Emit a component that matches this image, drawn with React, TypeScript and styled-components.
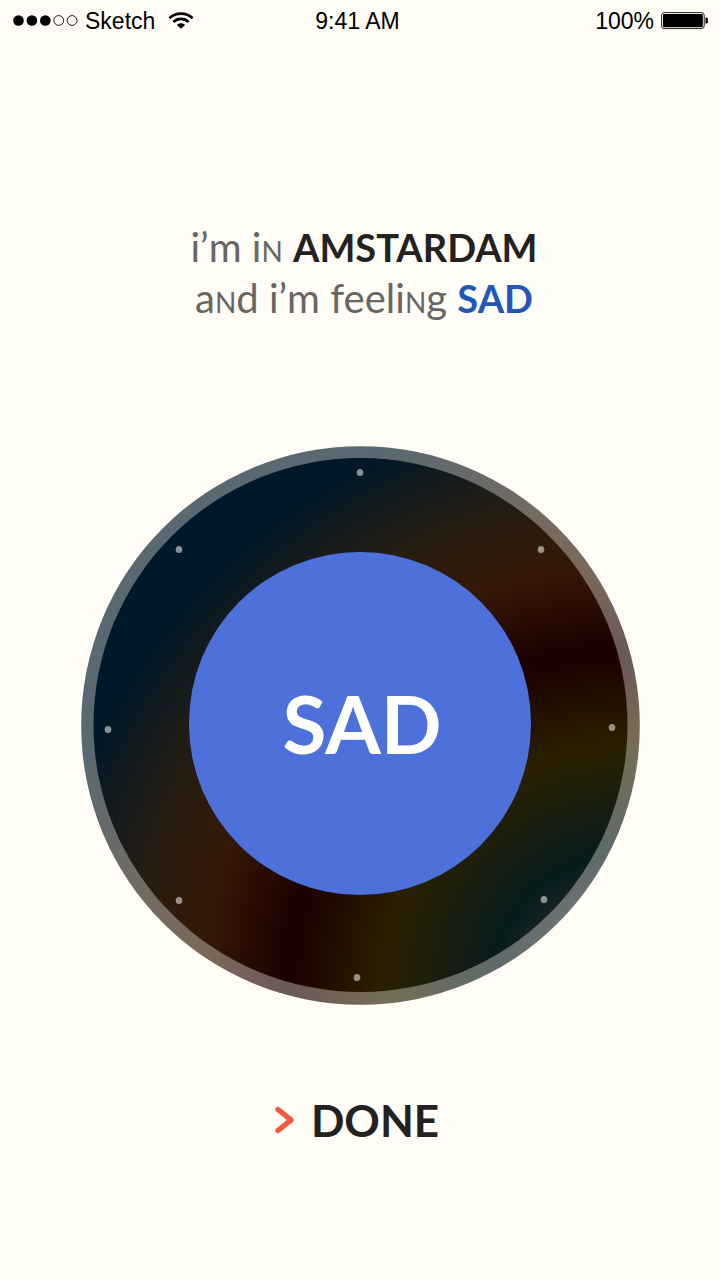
import React from "react";
import styled, { createGlobalStyle } from "styled-components";

const GlobalStyle = createGlobalStyle`
  * { box-sizing: border-box; }
  body {
    margin: 0;
    background: #fffdf6;
    color: #242220;
    font-family: Lato, "Liberation Sans", sans-serif;
  }
`;

const Screen = styled.div`
  display: flex;
  flex-direction: column;
  min-height: 100vh;
`;

const StatusBar = styled.header`
  display: grid;
  grid-template-columns: 1fr auto 1fr;
  align-items: center;
  height: 42px;
  padding: 0 12px 0 13px;
  color: #000;
  font: 23px/42px "Liberation Sans", sans-serif;
`;

const StatusGroup = styled.div<{ $align?: string }>`
  display: flex;
  align-items: center;
  justify-content: ${(p) => p.$align ?? "flex-start"};
  gap: 7px;
`;

const Carrier = styled.span`
  padding-right: 6px;
`;

const Clock = styled.time`
  padding-right: 6px;
`;

const Main = styled.main`
  flex: 1;
  display: flex;
  flex-direction: column;
  align-items: center;
  padding: 180px 0 120px;
`;

const Sentence = styled.h1`
  margin: 0 0 121px;
  padding-left: 8px;
  color: #686662;
  font-size: 40px;
  line-height: 51px;
  font-weight: 400;
  text-align: center;
`;

const Value = styled.strong<{ $color?: string }>`
  color: ${(p) => p.$color ?? "inherit"};
  font-size: 38px;
  font-weight: 700;
`;

const SmallCap = styled.span`
  font-variant-caps: small-caps;
`;

const Dial = styled.div`
  display: grid;
  place-items: center;
  width: 78%;
  max-width: 561px;
  aspect-ratio: 1;
  margin-bottom: 85px;

  > * { grid-area: 1 / 1; }
`;

const DialFace = styled.svg`
  display: block;
  width: 100%;
  height: 100%;
`;

const MoodButton = styled.button`
  width: 61%;
  height: 61%;
  margin-bottom: 4px;
  padding: 0 0 0 4px;
  border: 0;
  border-radius: 50%;
  background: #4d70da;
  color: #fff;
  font: 700 80px/100px Lato, "Liberation Sans", sans-serif;
  cursor: pointer;
`;

const DoneButton = styled.button`
  display: flex;
  align-items: center;
  gap: 16px;
  padding: 0 12px 0 0;
  margin-left: 6px;
  border: 0;
  background: none;
  color: #242220;
  font: 700 44px/58px Lato, "Liberation Sans", sans-serif;
  cursor: pointer;
`;

const ticks = [
  [360, 472], [541, 549], [612, 727], [544, 899],
  [357, 977], [179, 900], [108, 729], [179, 549],
];

const SignalDots = () => (
  <svg width="65" height="12" viewBox="0 0 65 12" aria-label="Signal 3 of 5">
    {[0, 1, 2, 3, 4].map((i) => (
      <circle key={i} cx={5.5 + i * 13.4} cy="5.5" r={i < 3 ? 5.3 : 4.9}
        fill={i < 3 ? "#000" : "none"} stroke={i < 3 ? "none" : "#000"} strokeWidth="0.9" />
    ))}
  </svg>
);

const Wifi = () => (
  <svg width="26" height="18" viewBox="0 0 26 18" aria-label="Wi-Fi">
    <g fill="none" stroke="#000" strokeWidth="2.7">
      <path d="M1.4 6.2C8 .2 18 .2 24.6 6.2" />
      <path d="M5.3 10C9.7 5.9 16.3 5.9 20.7 10" />
    </g>
    <path d="M8.8 13C11.2 10.8 14.8 10.8 17.2 13L13 16.8Z" fill="#000" />
  </svg>
);

const Battery = () => (
  <svg width="47" height="18" viewBox="0 0 47 18" aria-label="Battery full">
    <rect x="0.6" y="0.6" width="42.6" height="16" rx="2.6" fill="none" stroke="#222" strokeWidth="1" />
    <rect x="2" y="2" width="39.8" height="13.2" rx="1" fill="#000" />
    <path d="M44.4 5.5H45.4Q46.9 5.5 46.9 7V10Q46.9 11.5 45.4 11.5H44.4Z" fill="#000" />
  </svg>
);

export default function App() {
  return (
    <Screen>
      <GlobalStyle />
      <StatusBar>
        <StatusGroup>
          <SignalDots />
          <Carrier>Sketch</Carrier>
          <Wifi />
        </StatusGroup>
        <Clock>9:41 AM</Clock>
        <StatusGroup $align="flex-end">
          <span>100%</span>
          <Battery />
        </StatusGroup>
      </StatusBar>
      <Main>
        <Sentence>
          i’m i<SmallCap>n</SmallCap> <Value $color="#242220">AMSTARDAM</Value>
          <br />
          a<SmallCap>n</SmallCap>d i’m feeli<SmallCap>n</SmallCap>g <Value $color="#2257b8">SAD</Value>
        </Sentence>
        <Dial>
          <DialFace viewBox="80 445 561 561" aria-hidden="true">
            <defs>
              <radialGradient id="sheen" gradientUnits="userSpaceOnUse" cx="630" cy="992" r="600">
                <stop offset="0.16" stopColor="#20272b" />
                <stop offset="0.23" stopColor="#071c1d" />
                <stop offset="0.41" stopColor="#2b2000" />
                <stop offset="0.57" stopColor="#1b0000" />
                <stop offset="0.71" stopColor="#351807" />
                <stop offset="0.83" stopColor="#261d12" />
                <stop offset="0.99" stopColor="#001829" />
              </radialGradient>
            </defs>
            <circle cx="360.5" cy="725.5" r="279.3" fill="url(#sheen)" opacity="0.65" />
            <circle cx="360.5" cy="725" r="267" fill="url(#sheen)" />
            {ticks.map(([x, y]) => (
              <ellipse key={`${x}-${y}`} cx={x} cy={y + 0.5} rx="3.3" ry="3.6" fill="#fffdf6" opacity="0.53" />
            ))}
          </DialFace>
          <MoodButton type="button">SAD</MoodButton>
        </Dial>
        <DoneButton type="button">
          <svg width="20" height="28" viewBox="0 0 20 28" aria-hidden="true">
            <path d="M3 3.5L16 14L3 24.5" fill="none" stroke="#f0593b" strokeWidth="5.4"
              strokeLinecap="round" strokeLinejoin="round" />
          </svg>
          DONE
        </DoneButton>
      </Main>
    </Screen>
  );
}
